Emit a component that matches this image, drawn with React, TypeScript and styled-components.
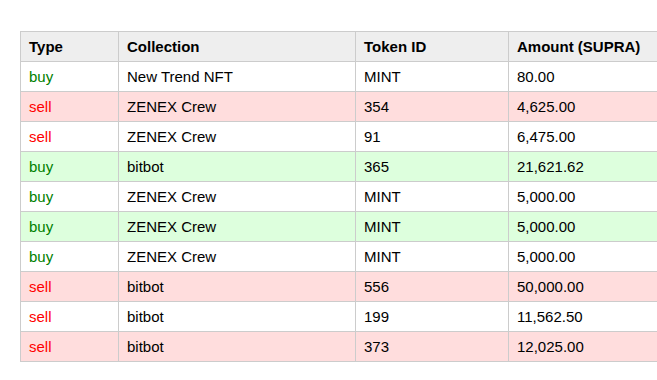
import React from 'react';
import styled, { createGlobalStyle } from 'styled-components';

type Trade = {
  type: 'buy' | 'sell';
  collection: string;
  tokenId: string;
  amount: string;
};

const trades: Trade[] = [
  { type: 'buy', collection: 'New Trend NFT', tokenId: 'MINT', amount: '80.00' },
  { type: 'sell', collection: 'ZENEX Crew', tokenId: '354', amount: '4,625.00' },
  { type: 'sell', collection: 'ZENEX Crew', tokenId: '91', amount: '6,475.00' },
  { type: 'buy', collection: 'bitbot', tokenId: '365', amount: '21,621.62' },
  { type: 'buy', collection: 'ZENEX Crew', tokenId: 'MINT', amount: '5,000.00' },
  { type: 'buy', collection: 'ZENEX Crew', tokenId: 'MINT', amount: '5,000.00' },
  { type: 'buy', collection: 'ZENEX Crew', tokenId: 'MINT', amount: '5,000.00' },
  { type: 'sell', collection: 'bitbot', tokenId: '556', amount: '50,000.00' },
  { type: 'sell', collection: 'bitbot', tokenId: '199', amount: '11,562.50' },
  { type: 'sell', collection: 'bitbot', tokenId: '373', amount: '12,025.00' },
];

export default function App() {
  return (
    <>
      <GlobalStyle />
      <Page>
        <Table>
          <colgroup>
            <col style={{ width: 98 }} />
            <col style={{ width: 237 }} />
            <col style={{ width: 153 }} />
            <col style={{ width: 200 }} />
          </colgroup>
          <thead>
            <tr>
              <Th>Type</Th>
              <Th>Collection</Th>
              <Th>Token ID</Th>
              <Th>Amount (SUPRA)</Th>
            </tr>
          </thead>
          <tbody>
            {trades.map((t, i) => (
              <Row key={i} $kind={t.type} $tinted={i % 2 === 1}>
                <TypeCell $kind={t.type}>{t.type}</TypeCell>
                <Td>{t.collection}</Td>
                <Td>{t.tokenId}</Td>
                <Td>{t.amount}</Td>
              </Row>
            ))}
          </tbody>
        </Table>
      </Page>
    </>
  );
}

const GlobalStyle = createGlobalStyle`
  html, body {
    margin: 0;
    background: #fff;
    overflow: hidden;
  }
  body {
    font-family: "Liberation Sans", Arial, sans-serif;
  }
`;

const Page = styled.div`
  padding: 31px 0 0 20px;
  overflow: hidden;
`;

const Table = styled.table`
  border-collapse: collapse;
  table-layout: fixed;
  width: 688px;
  font-size: 15px;
  color: #000;
`;

const Th = styled.th`
  background: #eeeeee;
  border: 1px solid #cccccc;
  text-align: left;
  font-weight: bold;
  height: 30px;
  padding: 0 8px;
  box-sizing: border-box;
`;

const Row = styled.tr<{ $kind: 'buy' | 'sell'; $tinted: boolean }>`
  background: ${p =>
    !p.$tinted ? '#ffffff' : p.$kind === 'buy' ? '#ddffdd' : '#ffdddd'};
`;

const Td = styled.td`
  border: 1px solid #cccccc;
  height: 30px;
  padding: 0 8px;
  box-sizing: border-box;
`;

const TypeCell = styled(Td)<{ $kind: 'buy' | 'sell' }>`
  color: ${p => (p.$kind === 'buy' ? '#008000' : '#ff0000')};
`;
